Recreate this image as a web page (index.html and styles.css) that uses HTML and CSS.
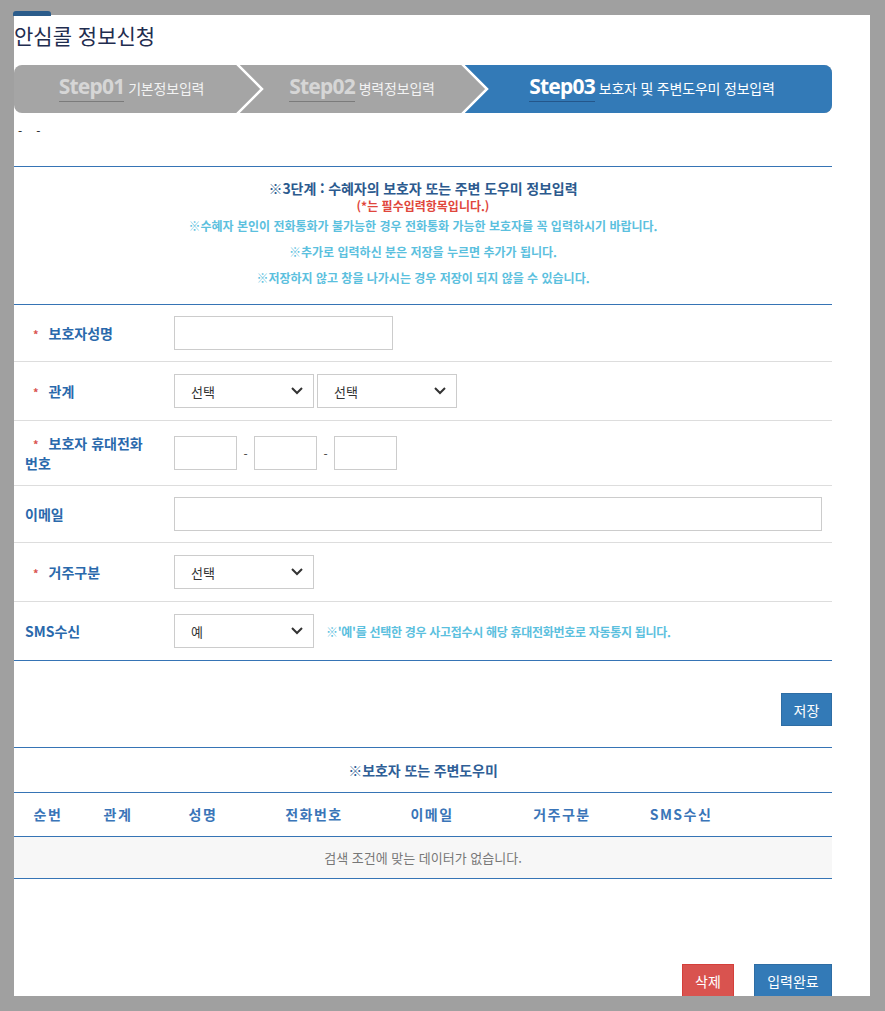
FILE: index.html
```html
<!DOCTYPE html>
<html lang="ko">
<head>
    <meta charset="UTF-8">
    <meta name="viewport" content="width=device-width, initial-scale=1.0">
    <title>안심콜 정보신청</title>
    <link rel="stylesheet" href="styles.css">
</head>
<body>
    <div class="popup">
        <h1 class="popup-title">안심콜 정보신청</h1>

        <div class="steps">
            <div class="step step-first">
                <p class="step-text"><span class="step-no">Step01</span> 기본정보입력</p>
            </div>
            <div class="step step-second">
                <p class="step-text"><span class="step-no">Step02</span> 병력정보입력</p>
            </div>
            <div class="step step-on">
                <p class="step-text"><span class="step-no">Step03</span> 보호자 및 주변도우미 정보입력</p>
            </div>
            <svg class="chev chev-1" width="28" height="48" viewBox="0 0 28 48"><polyline points="1,-1 26,24 1,49" fill="none" stroke="#fff" stroke-width="2.5"/></svg>
            <svg class="chev chev-2" width="28" height="48" viewBox="0 0 28 48"><polyline points="1,-1 26,24 1,49" fill="none" stroke="#fff" stroke-width="2.5"/></svg>
        </div>

        <p class="crumb"><span>-</span><span>-</span></p>

        <div class="guide">
            <p class="guide-title">※3단계 : 수혜자의 보호자 또는 주변 도우미 정보입력</p>
            <p class="guide-req">(*는 필수입력항목입니다.)</p>
            <p class="guide-note">※수혜자 본인이 전화통화가 불가능한 경우 전화통화 가능한 보호자를 꼭 입력하시기 바랍니다.</p>
            <p class="guide-note">※추가로 입력하신 분은 저장을 누르면 추가가 됩니다.</p>
            <p class="guide-note">※저장하지 않고 창을 나가시는 경우 저장이 되지 않을 수 있습니다.</p>
        </div>

        <form id="guardianForm" class="form-rows">
            <div class="row row-tight">
                <label class="row-label req" for="gName">보호자성명</label>
                <div class="row-field">
                    <input type="text" id="gName" class="inp inp-name">
                </div>
            </div>
            <div class="row">
                <label class="row-label req" for="gRel1">관계</label>
                <div class="row-field">
                    <span class="sel">
                        <select id="gRel1"><option>선택</option></select>
                        <svg class="sel-arrow" width="12" height="8" viewBox="0 0 12 8"><polyline points="1,1 6,6 11,1" fill="none" stroke="#333" stroke-width="2"/></svg>
                    </span>
                    <span class="sel sel-next">
                        <select id="gRel2"><option>선택</option></select>
                        <svg class="sel-arrow" width="12" height="8" viewBox="0 0 12 8"><polyline points="1,1 6,6 11,1" fill="none" stroke="#333" stroke-width="2"/></svg>
                    </span>
                </div>
            </div>
            <div class="row">
                <label class="row-label req" for="gTel1">보호자 휴대전화 번호</label>
                <div class="row-field">
                    <input type="text" id="gTel1" class="inp inp-tel">
                    <span class="tel-dash">-</span>
                    <input type="text" id="gTel2" class="inp inp-tel">
                    <span class="tel-dash">-</span>
                    <input type="text" id="gTel3" class="inp inp-tel">
                </div>
            </div>
            <div class="row row-tight">
                <label class="row-label" for="gMail">이메일</label>
                <div class="row-field">
                    <input type="text" id="gMail" class="inp inp-mail">
                </div>
            </div>
            <div class="row">
                <label class="row-label req" for="gLive">거주구분</label>
                <div class="row-field">
                    <span class="sel">
                        <select id="gLive"><option>선택</option></select>
                        <svg class="sel-arrow" width="12" height="8" viewBox="0 0 12 8"><polyline points="1,1 6,6 11,1" fill="none" stroke="#333" stroke-width="2"/></svg>
                    </span>
                </div>
            </div>
            <div class="row row-last">
                <label class="row-label" for="gSms">SMS수신</label>
                <div class="row-field">
                    <span class="sel">
                        <select id="gSms"><option>예</option><option>아니오</option></select>
                        <svg class="sel-arrow" width="12" height="8" viewBox="0 0 12 8"><polyline points="1,1 6,6 11,1" fill="none" stroke="#333" stroke-width="2"/></svg>
                    </span>
                    <span class="sms-note">※'예'를 선택한 경우 사고접수시 해당 휴대전화번호로 자동통지 됩니다.</span>
                </div>
            </div>
        </form>

        <div class="save-bar">
            <button type="button" class="btn btn-blue btn-save">저장</button>
        </div>

        <div class="list-title">※보호자 또는 주변도우미</div>
        <div class="list-head">
            <span>순번</span>
            <span>관계</span>
            <span>성명</span>
            <span>전화번호</span>
            <span>이메일</span>
            <span>거주구분</span>
            <span>SMS수신</span>
            <span></span>
        </div>
        <div class="list-empty">검색 조건에 맞는 데이터가 없습니다.</div>

        <div class="bottom-bar">
            <button type="button" class="btn btn-red btn-del">삭제</button>
            <button type="button" class="btn btn-blue btn-done">입력완료</button>
        </div>
    </div>
</body>
</html>
```

FILE: styles.css
```css
* {
    box-sizing: border-box;
}
body {
    margin: 0;
    background: #a0a0a0;
    font-family: "Noto Sans CJK KR", "Noto Sans", sans-serif;
    color: #333;
}
p {
    margin: 0;
}
.popup {
    position: relative;
    width: 856px;
    height: 981px;
    margin: 15px 0 0 14px;
    padding-right: 38px;
    background: #fff;
}
.popup::before {
    content: "";
    position: absolute;
    top: -4px;
    left: -1px;
    width: 38px;
    height: 5px;
    background: #2b5c8b;
    border-radius: 3px 3px 0 0;
}
.popup-title {
    margin: 0;
    padding-top: 5px;
    font-size: 21px;
    font-weight: normal;
    line-height: 30px;
    color: #1f2d4f;
}

/* steps */
.steps {
    position: relative;
    display: flex;
    height: 48px;
    margin-top: 15px;
    background: #a5a5a5;
    border-radius: 8px;
    overflow: hidden;
}
.step {
    display: flex;
    align-items: center;
    justify-content: center;
}
.step-first {
    width: 223px;
    padding-left: 12px;
}
.step-second {
    width: 225px;
    padding-left: 25px;
}
.step-on {
    flex: 1;
    padding-left: 10px;
    background: #337ab7;
    clip-path: polygon(0 0, 100% 0, 100% 100%, 0 100%, 24px 50%);
}
.step-text {
    font-size: 14px;
    letter-spacing: -0.2px;
    color: #f2f2f2;
    white-space: nowrap;
}
.step-no {
    display: inline-block;
    padding-bottom: 4px;
    border-bottom: 1px solid #7b7b7b;
    font-family: "Noto Sans", sans-serif;
    font-size: 21px;
    font-weight: bold;
    line-height: 1;
    letter-spacing: -0.8px;
    color: #d6d6d6;
}
.step-on .step-text {
    color: #fff;
}
.step-on .step-no {
    color: #fff;
    border-bottom-color: #24568a;
}
.chev {
    position: absolute;
    top: 0;
}
.chev-1 {
    left: 222px;
}
.chev-2 {
    left: 447px;
}

.crumb {
    display: flex;
    gap: 14px;
    height: 20px;
    margin-top: 8px;
    padding-left: 4px;
    font-size: 12px;
    line-height: 20px;
    color: #222;
}

/* guide text */
.guide {
    margin-top: 25px;
    padding: 11px 0 13px;
    border-top: 1px solid #3674b5;
    text-align: center;
    font-weight: bold;
}
.guide-title {
    font-size: 14px;
    line-height: 20px;
    letter-spacing: -0.1px;
    color: #2c5a8e;
}
.guide-req {
    font-size: 12px;
    line-height: 15px;
    color: #e0463c;
}
.guide-note {
    font-size: 12px;
    line-height: 26px;
    color: #5bc0de;
}

/* form */
.form-rows {
    margin: 0;
    border-top: 1px solid #3674b5;
}
.row {
    display: flex;
    align-items: center;
    padding: 12px 0;
    border-bottom: 1px solid #ddd;
}
.row-tight {
    padding: 11px 0;
}
.row-last {
    border-bottom-color: #3674b5;
}
.row-label {
    flex: none;
    width: 160px;
    padding: 0 10px 0 11px;
    font-size: 14px;
    font-weight: bold;
    line-height: 20px;
    word-break: keep-all;
    color: #2a69ac;
}
.req::before {
    content: "*";
    margin: 0 10px 0 8px;
    font-size: 11px;
    line-height: 1;
    color: #d9534f;
}
.row-field {
    display: flex;
    align-items: center;
}
.inp {
    height: 34px;
    padding: 0 8px;
    border: 1px solid #ccc;
    font-family: inherit;
    font-size: 13px;
}
.inp-name {
    width: 219px;
}
.inp-tel {
    width: 63px;
}
.inp-mail {
    width: 648px;
}
.tel-dash {
    width: 17px;
    text-align: center;
    font-size: 12px;
    color: #444;
}
.sel {
    position: relative;
    display: inline-block;
}
.sel-next {
    margin-left: 3px;
}
.sel select {
    display: block;
    width: 140px;
    height: 34px;
    padding: 0 30px 0 16px;
    border: 1px solid #ccc;
    border-radius: 0;
    background: #fff;
    -webkit-appearance: none;
    appearance: none;
    font-family: inherit;
    font-size: 13px;
    color: #333;
}
.sel-arrow {
    position: absolute;
    right: 11px;
    top: 13px;
    pointer-events: none;
}
.sms-note {
    margin-left: 12px;
    font-size: 12px;
    font-weight: bold;
    letter-spacing: -0.3px;
    color: #5bc0de;
}

/* buttons */
.btn {
    height: 33px;
    padding: 0;
    border: 1px solid;
    font-family: inherit;
    font-size: 14px;
    color: #fff;
    cursor: pointer;
}
.btn-blue {
    background: #337ab7;
    border-color: #2e6da4;
}
.btn-red {
    background: #d9534f;
    border-color: #d43f3a;
}
.save-bar {
    display: flex;
    justify-content: flex-end;
    margin-top: 32px;
}
.btn-save {
    width: 51px;
}

/* list */
.list-title {
    margin-top: 21px;
    height: 45px;
    border-top: 1px solid #3674b5;
    line-height: 44px;
    text-align: center;
    font-size: 14px;
    font-weight: bold;
    letter-spacing: -0.1px;
    color: #2f5f97;
}
.list-head {
    display: grid;
    grid-template-columns: 68px 72px 98px 124px 112px 148px 90px 1fr;
    height: 45px;
    border-top: 1px solid #3674b5;
    border-bottom: 1px solid #3674b5;
    line-height: 43px;
    text-align: center;
    font-size: 14px;
    font-weight: bold;
    letter-spacing: 1.5px;
    color: #3a75b8;
}
.list-empty {
    height: 42px;
    border-bottom: 1px solid #3674b5;
    background: #f7f7f7;
    line-height: 41px;
    text-align: center;
    font-size: 13px;
    color: #777;
}
.bottom-bar {
    display: flex;
    justify-content: flex-end;
    gap: 20px;
    margin-top: 85px;
}
.bottom-bar .btn {
    height: 34px;
    border-bottom-width: 2px;
}
.btn-red {
    border-bottom-color: #a8302c;
}
.btn-done {
    width: 78px;
    border-bottom-color: #23527c;
}
.btn-del {
    width: 52px;
}
```
